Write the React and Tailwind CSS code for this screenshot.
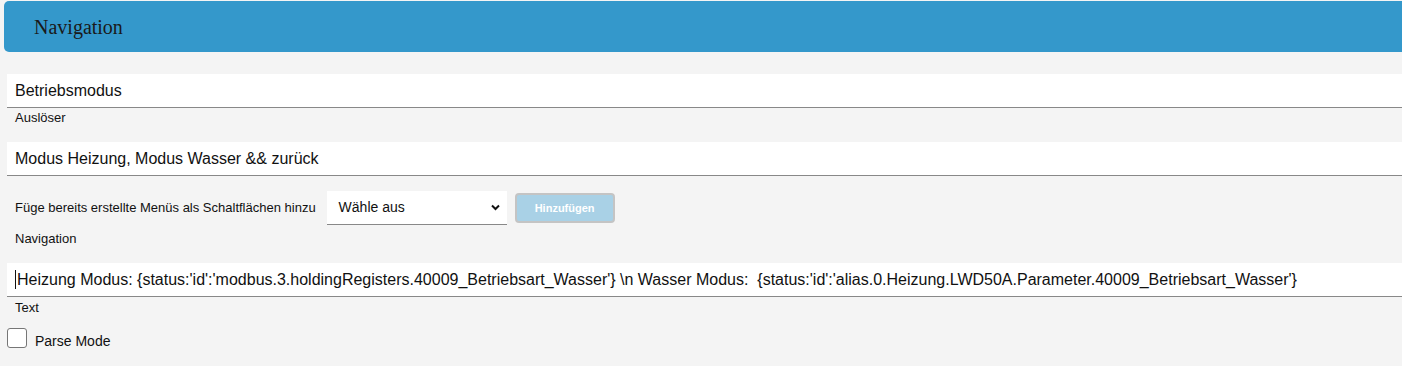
import React from "react";

const sans = { fontFamily: '"Liberation Sans", Arial, sans-serif' };

const Field = ({ children, className = "" }) => (
  <div
    className={`flex h-[34px] items-center border-b border-[#888888] bg-white pl-[8px] text-[16px] text-[#111] ${className}`}
  >
    {children}
  </div>
);

const Label = ({ children, className = "" }) => (
  <div className={`pl-[8px] text-[13px] leading-[14px] text-[#111] ${className}`}>
    {children}
  </div>
);

const App = () => {
  return (
    <div className="min-h-screen w-full overflow-hidden bg-[#f4f4f4]" style={sans}>
      {/* Header */}
      <div className="ml-[4px] mt-[1px] flex h-[51px] items-center rounded-l-[5px] bg-[#3498cb] pl-[30px]">
        <span
          className="text-[20px] text-[#1a1a1a]"
          style={{ fontFamily: '"Liberation Serif", "Times New Roman", serif' }}
        >
          Navigation
        </span>
      </div>

      <div className="pl-[7px]">
        <Field className="mt-[22px]">Betriebsmodus</Field>
        <Label className="h-[34px] pt-[3px]">Auslöser</Label>

        <Field>Modus Heizung, Modus Wasser &amp;&amp; zurück</Field>

        {/* Menu row */}
        <div className="mt-[15px] flex items-center">
          <span className="pl-[8px] text-[13px] text-[#111]">
            Füge bereits erstellte Menüs als Schaltflächen hinzu
          </span>
          <div className="ml-[11px] flex h-[34px] w-[180px] items-center justify-between border-b border-[#888888] bg-white pl-[12px] pr-[7px] text-[14px] text-[#111]">
            <span>Wähle aus</span>
            <svg width="9" height="7" viewBox="0 0 9 7" fill="none">
              <path d="M1 1.5 L4.5 5 L8 1.5" stroke="#111" strokeWidth="2" />
            </svg>
          </div>
          <button
            type="button"
            className="ml-[8px] h-[30px] w-[100px] rounded-[4px] border-2 border-[#c4c4c4] bg-[#a9d1e6] text-[11px] font-bold text-white"
          >
            Hinzufügen
          </button>
        </div>

        <Label className="h-[38px] pt-[7px]">Navigation</Label>

        <Field>
          <span className="mr-[1px] inline-block h-[19px] w-[1px] bg-[#111]" />
          <span className="whitespace-pre">
            Heizung Modus: {"{status:'id':'modbus.3.holdingRegisters.40009_Betriebsart_Wasser'}"} \n Wasser Modus:  {"{status:'id':'alias.0.Heizung.LWD50A.Parameter.40009_Betriebsart_Wasser'}"}
          </span>
        </Field>
        <Label className="h-[26px] pt-[4px]">Text</Label>

        <div className="flex items-center">
          <span className="inline-block h-[20px] w-[20px] rounded-[3px] border border-[#767676] bg-white" />
          <span className="ml-[8px] mt-[8px] text-[14px] text-[#111]">Parse Mode</span>
        </div>
      </div>
    </div>
  );
};

export default App;
